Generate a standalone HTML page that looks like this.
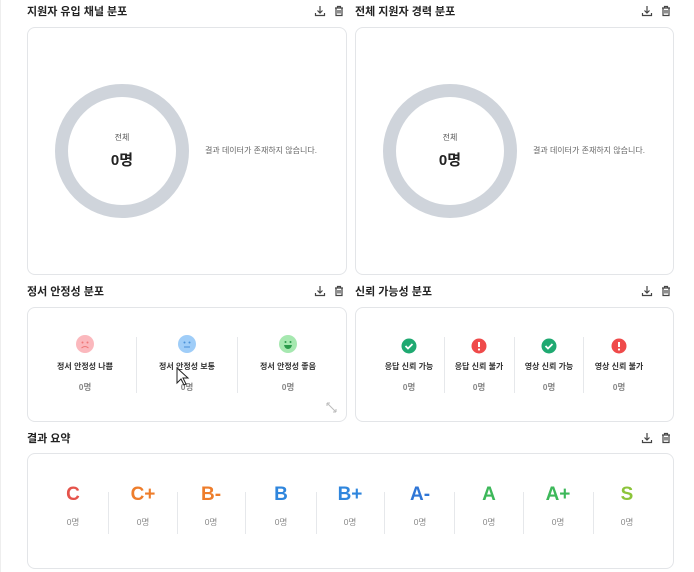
<!DOCTYPE html>
<html><head><meta charset="utf-8"><style>
*{box-sizing:border-box;margin:0;padding:0}
body{width:694px;height:572px;background:#fff;font-family:"Liberation Sans","Noto Sans CJK KR",sans-serif;position:relative;overflow:hidden;color:#222}
.t{position:absolute;font-size:11px;font-weight:700;color:#222}
.card{position:absolute;border:1px solid #e3e5e8;border-radius:8px;background:#fff}
.ic{position:absolute;width:12px;height:12px}
.donut{position:absolute;width:134px;height:134px;border-radius:50%;border:13px solid #cfd4db}
.dl{position:absolute;font-size:8px;color:#555;text-align:center;width:100px}
.dv{position:absolute;font-size:15px;font-weight:700;color:#222;text-align:center;width:100px}
.msg{position:absolute;font-size:8px;color:#666}
.col{position:absolute;text-align:center}
.lbl{font-size:8px;font-weight:700;color:#333}
.cnt{font-size:8.5px;color:#888;font-weight:700}
.vd{position:absolute;width:1px;background:#e6e8eb}
.g{position:absolute;font-size:19px;font-weight:700;text-align:center;width:60px}
.gc{position:absolute;font-size:8.5px;color:#888;text-align:center;width:60px}
</style></head><body>
<div style="position:absolute;left:0;top:0;width:1px;height:572px;background:#eee"></div>

<svg width="0" height="0" style="position:absolute"><defs>
<g id="dn"><path d="M6 1v7M3.5 5.5L6 8l2.5-2.5M1.5 8v2.5h9V8" fill="none" stroke="#444" stroke-width="1.2"/></g>
<g id="tr"><path d="M2 3h8M4.5 3V1.5h3V3M3 3v7.5h6V3M5 5v3.5M7 5v3.5" fill="none" stroke="#444" stroke-width="1.2"/></g>
</defs></svg>

<!-- row 1 -->
<div class="t" style="left:27px;top:3px">지원자 유입 채널 분포</div>
<svg class="ic" style="left:314px;top:5px"><use href="#dn"/></svg>
<svg class="ic" style="left:333px;top:5px"><use href="#tr"/></svg>
<div class="card" style="left:27px;top:27px;width:320px;height:248px"></div>
<div class="donut" style="left:55px;top:84px"></div>
<div class="dl" style="left:72px;top:132px">전체</div>
<div class="dv" style="left:72px;top:149px">0명</div>
<div class="msg" style="left:205px;top:145px">결과 데이터가 존재하지 않습니다.</div>

<div class="t" style="left:355px;top:3px">전체 지원자 경력 분포</div>
<svg class="ic" style="left:641px;top:5px"><use href="#dn"/></svg>
<svg class="ic" style="left:660px;top:5px"><use href="#tr"/></svg>
<div class="card" style="left:355px;top:27px;width:319px;height:248px"></div>
<div class="donut" style="left:383px;top:84px"></div>
<div class="dl" style="left:400px;top:132px">전체</div>
<div class="dv" style="left:400px;top:149px">0명</div>
<div class="msg" style="left:533px;top:145px">결과 데이터가 존재하지 않습니다.</div>

<!-- row 2 -->
<div class="t" style="left:27px;top:283px">정서 안정성 분포</div>
<svg class="ic" style="left:314px;top:285px"><use href="#dn"/></svg>
<svg class="ic" style="left:333px;top:285px"><use href="#tr"/></svg>
<div class="card" style="left:27px;top:307px;width:320px;height:115px"></div>
<div class="vd" style="left:136px;top:337px;height:56px"></div>
<div class="vd" style="left:237px;top:337px;height:56px"></div>
<svg style="position:absolute;left:76px;top:335px" width="18" height="18"><circle cx="9" cy="9" r="9" fill="#fbb8bd"/><circle cx="6.5" cy="7.5" r="1" fill="#e77"/><circle cx="11.5" cy="7.5" r="1" fill="#e77"/><path d="M5.5 13q3.5-3 7 0" stroke="#e77" fill="none"/></svg>
<svg style="position:absolute;left:178px;top:335px" width="18" height="18"><circle cx="9" cy="9" r="9" fill="#9fcdf8"/><circle cx="6.5" cy="7.5" r="1" fill="#4a90d9"/><circle cx="11.5" cy="7.5" r="1" fill="#4a90d9"/><path d="M6 12h6" stroke="#4a90d9"/></svg>
<svg style="position:absolute;left:279px;top:335px" width="18" height="18"><circle cx="9" cy="9" r="9" fill="#a6e8b0"/><circle cx="6.5" cy="7" r="1" fill="#2a9a4a"/><circle cx="11.5" cy="7" r="1" fill="#2a9a4a"/><path d="M5 10h8q-1 4-4 4t-4-4z" fill="#2a9a4a"/></svg>
<div class="col lbl" style="left:40px;top:361px;width:90px">정서 안정성 나쁨</div>
<div class="col lbl" style="left:142px;top:361px;width:90px">정서 안정성 보통</div>
<div class="col lbl" style="left:243px;top:361px;width:90px">정서 안정성 좋음</div>
<div class="col cnt" style="left:40px;top:381px;width:90px">0명</div>
<div class="col cnt" style="left:142px;top:381px;width:90px">0명</div>
<div class="col cnt" style="left:243px;top:381px;width:90px">0명</div>
<svg style="position:absolute;left:326px;top:402px" width="11" height="11"><path d="M1 1l9 9M1 1h3M1 1v3M10 10h-3M10 10v-3" stroke="#bbb" fill="none"/></svg>
<svg style="position:absolute;left:176px;top:367px" width="14" height="20"><path d="M1 1v15l4-4 3 6 2-1-3-6h5z" fill="#fff" stroke="#222" stroke-width="1"/></svg>

<div class="t" style="left:355px;top:283px">신뢰 가능성 분포</div>
<svg class="ic" style="left:641px;top:285px"><use href="#dn"/></svg>
<svg class="ic" style="left:660px;top:285px"><use href="#tr"/></svg>
<div class="card" style="left:355px;top:307px;width:319px;height:115px"></div>
<div class="vd" style="left:444px;top:337px;height:56px"></div>
<div class="vd" style="left:514px;top:337px;height:56px"></div>
<div class="vd" style="left:583px;top:337px;height:56px"></div>
<svg style="position:absolute;left:401px;top:338px" width="16" height="16"><circle cx="8" cy="8" r="7.5" fill="#1fa971"/><path d="M4.5 8l2.5 2.5 4.5-4.5" stroke="#fff" stroke-width="1.8" fill="none"/></svg>
<svg style="position:absolute;left:471px;top:338px" width="16" height="16"><circle cx="8" cy="8" r="7.5" fill="#ef4a4a"/><path d="M8 4v5" stroke="#fff" stroke-width="2"/><circle cx="8" cy="11.5" r="1.1" fill="#fff"/></svg>
<svg style="position:absolute;left:541px;top:338px" width="16" height="16"><circle cx="8" cy="8" r="7.5" fill="#1fa971"/><path d="M4.5 8l2.5 2.5 4.5-4.5" stroke="#fff" stroke-width="1.8" fill="none"/></svg>
<svg style="position:absolute;left:611px;top:338px" width="16" height="16"><circle cx="8" cy="8" r="7.5" fill="#ef4a4a"/><path d="M8 4v5" stroke="#fff" stroke-width="2"/><circle cx="8" cy="11.5" r="1.1" fill="#fff"/></svg>
<div class="col lbl" style="left:374px;top:361px;width:70px">응답 신뢰 가능</div>
<div class="col lbl" style="left:444px;top:361px;width:70px">응답 신뢰 불가</div>
<div class="col lbl" style="left:514px;top:361px;width:70px">영상 신뢰 가능</div>
<div class="col lbl" style="left:584px;top:361px;width:70px">영상 신뢰 불가</div>
<div class="col cnt" style="left:374px;top:381px;width:70px">0명</div>
<div class="col cnt" style="left:444px;top:381px;width:70px">0명</div>
<div class="col cnt" style="left:514px;top:381px;width:70px">0명</div>
<div class="col cnt" style="left:584px;top:381px;width:70px">0명</div>

<!-- row 3 -->
<div class="t" style="left:27px;top:430px">결과 요약</div>
<svg class="ic" style="left:641px;top:432px"><use href="#dn"/></svg>
<svg class="ic" style="left:660px;top:432px"><use href="#tr"/></svg>
<div class="card" style="left:27px;top:453px;width:647px;height:116px"></div>
<div class="vd" style="left:108px;top:492px;height:42px"></div>
<div class="vd" style="left:177px;top:492px;height:42px"></div>
<div class="vd" style="left:245px;top:492px;height:42px"></div>
<div class="vd" style="left:316px;top:492px;height:42px"></div>
<div class="vd" style="left:384px;top:492px;height:42px"></div>
<div class="vd" style="left:454px;top:492px;height:42px"></div>
<div class="vd" style="left:523px;top:492px;height:42px"></div>
<div class="vd" style="left:593px;top:492px;height:42px"></div>
<div class="g" style="left:43px;top:484px;color:#e5534b">C</div>
<div class="g" style="left:113px;top:484px;color:#ee7d2b">C+</div>
<div class="g" style="left:181px;top:484px;color:#ee7d2b">B-</div>
<div class="g" style="left:251px;top:484px;color:#2f86dd">B</div>
<div class="g" style="left:320px;top:484px;color:#2f86dd">B+</div>
<div class="g" style="left:390px;top:484px;color:#2f76d6">A-</div>
<div class="g" style="left:459px;top:484px;color:#3db85a">A</div>
<div class="g" style="left:528px;top:484px;color:#3db85a">A+</div>
<div class="g" style="left:597px;top:484px;color:#8cc43a">S</div>
<div class="gc" style="left:43px;top:516px">0명</div>
<div class="gc" style="left:113px;top:516px">0명</div>
<div class="gc" style="left:181px;top:516px">0명</div>
<div class="gc" style="left:251px;top:516px">0명</div>
<div class="gc" style="left:320px;top:516px">0명</div>
<div class="gc" style="left:390px;top:516px">0명</div>
<div class="gc" style="left:459px;top:516px">0명</div>
<div class="gc" style="left:528px;top:516px">0명</div>
<div class="gc" style="left:597px;top:516px">0명</div>
</body></html>
